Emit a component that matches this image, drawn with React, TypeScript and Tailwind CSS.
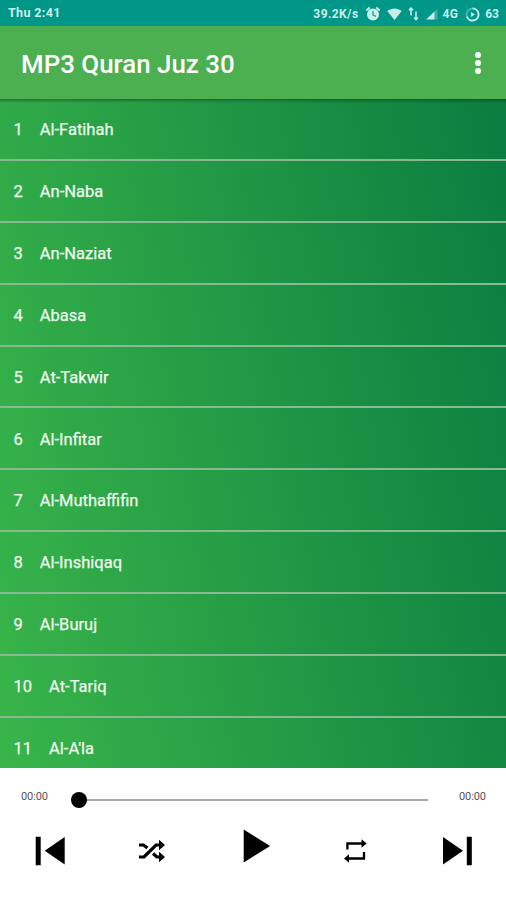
import { useState } from "react";

const surahs = [
  "Al-Fatihah",
  "An-Naba",
  "An-Naziat",
  "Abasa",
  "At-Takwir",
  "Al-Infitar",
  "Al-Muthaffifin",
  "Al-Inshiqaq",
  "Al-Buruj",
  "At-Tariq",
  "Al-A'la",
];

function StatusBar() {
  return (
    <div className="flex h-[26px] shrink-0 items-center bg-[#009688] pl-2 pr-[7px] pt-[2px] text-[12px] font-bold text-[#c9efe9]">
      <span className="flex-1 pb-px text-[12.500px] tracking-[0.35px]">Thu 2:41</span>
      <span className="pb-px tracking-[0.4px]">39.2K/s</span>
      <svg className="ml-[6px]" width="16" height="16" viewBox="0 0 16 16" fill="none">
        <circle cx="8" cy="8.5" r="6" fill="currentColor" />
        <path d="M1.3 4.4 4.8 1.4M14.7 4.4 11.200 1.4" stroke="currentColor" strokeWidth="2" />
        <path d="M8 5v4l2.800 1.400" stroke="#009688" strokeWidth="1.200" />
      </svg>
      <svg className="ml-[6px]" width="15" height="14" viewBox="0 0 15 14" fill="currentColor">
        <path d="M.3 4C4.500.6 10.500.6 14.700 4L7.500 13z" />
      </svg>
      <svg className="ml-[6px]" width="11" height="14" viewBox="0 0 11 14" fill="none" stroke="currentColor" strokeWidth="1.500">
        <path d="M3 8.500V1.200M1 3.300 3 1.100l2 2.200M8 4.500v8M6 10.500l2 2.200 2-2.200" />
      </svg>
      <svg className="ml-[7px]" width="12" height="12" viewBox="0 0 12 12" fill="currentColor">
        <path d="M0 11.500 8.500 3.500v8z" />
        <path d="M8.500 3.500 11.500.6v10.900h-3z" opacity=".3" />
      </svg>
      <span className="ml-[5px] pb-px tracking-[0.3px]">4G</span>
      <svg className="ml-[7px]" width="15" height="15" viewBox="0 0 15 15" fill="none" stroke="currentColor" strokeWidth="2">
        <path d="M7.500 1.500a6 6 0 1 1-5.600 8" />
        <path d="M7.500 1.500a6 6 0 0 0-5.600 8" opacity=".35" />
        <path d="M6 5v5l4-2.500z" fill="currentColor" stroke="none" />
      </svg>
      <span className="ml-[5px] pb-px">63</span>
    </div>
  );
}

function Player() {
  const [position] = useState(0);

  return (
    <footer className="h-[132px] shrink-0 bg-white text-black">
      <div className="flex h-[64px] items-center">
        <span className="w-[71px] pb-[5px] pl-[21px] text-[11px] tracking-[-0.1px] text-[#555]">00:00</span>
        <div className="flex w-[357px] items-center">
          <div style={{ width: position }} className="h-[2px] bg-black" />
          <div className="size-[15.500px] shrink-0 rounded-full bg-black" />
          <div className="h-[2px] flex-1 bg-[#a9a9a9]" />
        </div>
        <span className="ml-[31px] pb-[5px] text-[11px] tracking-[-0.1px] text-[#555]">00:00</span>
      </div>
      <div className="flex pl-[35px]">
        <svg className="mt-[4px]" width="30" height="30" viewBox="0 0 30 30" fill="currentColor">
          <path d="M.7.7h5v28.600h-5zM29.700 1v27.500L9.700 14.700z" />
        </svg>
        <svg className="ml-[73px] mt-[7px]" width="28" height="24" viewBox="0 0 28 24" fill="none" stroke="currentColor" strokeWidth="3.200">
          <path d="M1 6h4.500L9.500 9M1 18h5L18 6h5M15 14.500 19 18h4" />
          <path d="M21 .8l6 5.200-6 5.200zM21 12.800l6 5.200-6 5.200z" fill="currentColor" stroke="none" />
        </svg>
        <svg className="ml-[77px] mt-[-3px]" width="28" height="34" viewBox="0 0 28 34" fill="currentColor">
          <path d="M.7.500v33l26.500-16.500z" />
        </svg>
        <svg className="ml-[73px] mt-[7px]" width="24" height="24" viewBox="0 0 24 24" fill="none" stroke="currentColor" strokeWidth="2.300">
          <path d="M3.400 10.500V4.500H19M20 13v6.500H4" />
          <path d="M17.500.300 22.700 4.500l-5.200 4.200zM5 15.300 0 19.500l5 4.200z" fill="currentColor" stroke="none" />
        </svg>
        <svg className="ml-[75px] mt-[4px]" width="30" height="30" viewBox="0 0 30 30" fill="currentColor">
          <path d="M23.800.7h5v28.600h-5zM0 1v27.500L20 14.700z" />
        </svg>
      </div>
    </footer>
  );
}

export default function App() {
  return (
    <div className="flex h-[900px] w-[506px] flex-col overflow-hidden bg-white font-[Roboto,sans-serif]">
      <StatusBar />
      <header className="flex h-[73px] shrink-0 items-center justify-between bg-[#4caf50] pl-[21px] pr-[25px]">
        <h1 className="pt-[3px] text-[25.900px] font-medium text-white">MP3 Quran Juz 30</h1>
        <button aria-label="More" className="flex flex-col gap-[2px]">
          <i className="size-[6px] rounded-full bg-white" />
          <i className="size-[6px] rounded-full bg-white" />
          <i className="size-[6px] rounded-full bg-white" />
        </button>
      </header>
      <div className="flex-1 overflow-hidden bg-linear-[80deg,#39b54a,#0b7d40]">
        <div className="h-1 bg-linear-to-b from-black/30 to-transparent" />
        <ul className="-mt-1">
          {surahs.map((name, i) => (
            <li key={name} className="flex h-[61.900px] items-center border-b-2 border-[#86bb92] pl-[13.500px] pt-[3px] text-[16.500px] text-[#effaef] [-webkit-text-stroke:0.25px_#effaef]">
              <span>{i + 1}</span>
              <span className="ml-[17px]">{name}</span>
            </li>
          ))}
        </ul>
      </div>
      <Player />
    </div>
  );
}
